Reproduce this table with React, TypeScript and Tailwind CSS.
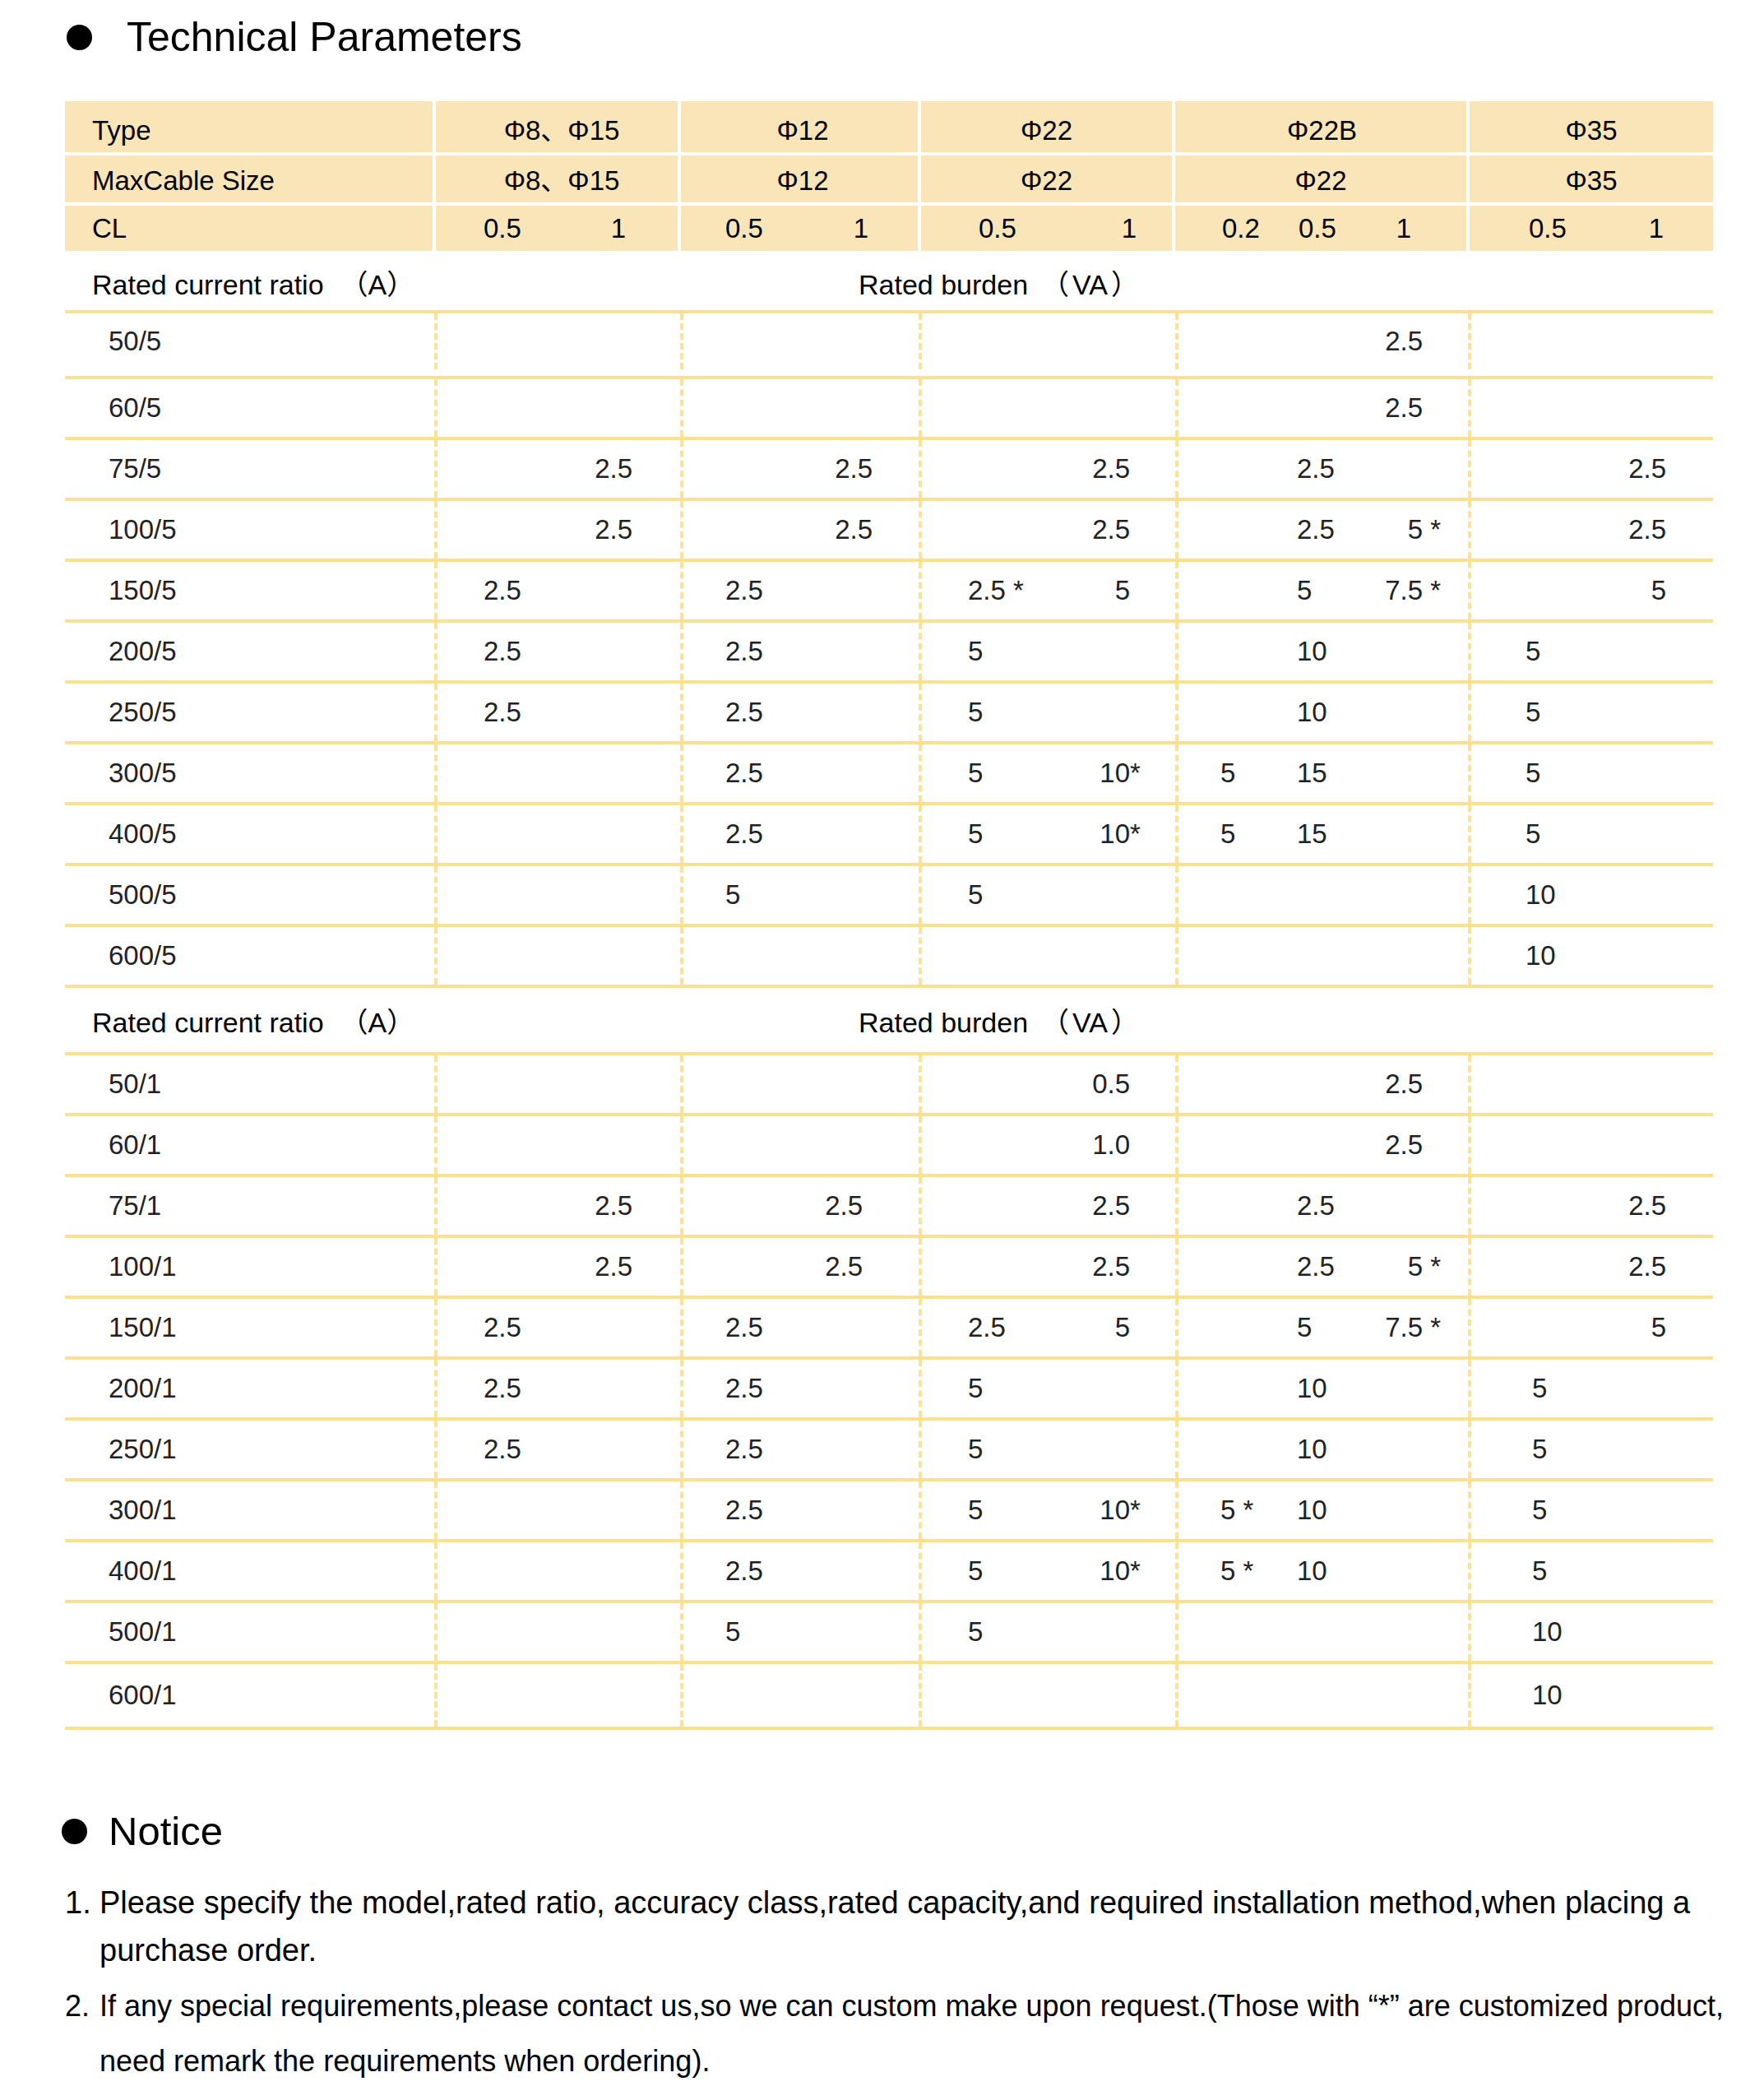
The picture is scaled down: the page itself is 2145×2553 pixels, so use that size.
const font = "font-['Liberation_Sans','Noto_Sans_CJK_SC',sans-serif]"

const bodyGrid = 'grid grid-cols-[449px_299px_290px_312px_356px_298px]'
const padA = [
  'pl-[56px] pr-[58px]',
  'pl-[51px] pr-[56px]',
  'pl-[56px] pr-[55px]',
  'pl-[51px] pr-[55px]',
  'pl-[66px] pr-[57px]',
]
const padB = [
  'pl-[56px] pr-[58px]',
  'pl-[51px] pr-[68px]',
  'pl-[56px] pr-[55px]',
  'pl-[51px] pr-[55px]',
  'pl-[74px] pr-[57px]',
]
const headPad = [
  'pl-[58px] pr-[63px]',
  'pl-[54px] pr-[60px]',
  'pl-[70px] pr-[43px]',
  'pl-[57px] pr-[67px]',
  'pl-[72px] pr-[60px]',
]

type Row = { label: string; c: string[][] }

const e = ['', '']
const e3 = ['', '', '']

const rowsA: Row[] = [
  { label: '50/5', c: [e, e, e, ['', '', '2.5'], e] },
  { label: '60/5', c: [e, e, e, ['', '', '2.5'], e] },
  { label: '75/5', c: [['', '2.5'], ['', '2.5'], ['', '2.5'], ['', '2.5', ''], ['', '2.5']] },
  { label: '100/5', c: [['', '2.5'], ['', '2.5'], ['', '2.5'], ['', '2.5', '5 *'], ['', '2.5']] },
  { label: '150/5', c: [['2.5', ''], ['2.5', ''], ['2.5 *', '5'], ['', '5', '7.5 *'], ['', '5']] },
  { label: '200/5', c: [['2.5', ''], ['2.5', ''], ['5', ''], ['', '10', ''], ['5', '']] },
  { label: '250/5', c: [['2.5', ''], ['2.5', ''], ['5', ''], ['', '10', ''], ['5', '']] },
  { label: '300/5', c: [e, ['2.5', ''], ['5', '10*'], ['5', '15', ''], ['5', '']] },
  { label: '400/5', c: [e, ['2.5', ''], ['5', '10*'], ['5', '15', ''], ['5', '']] },
  { label: '500/5', c: [e, ['5', ''], ['5', ''], e3, ['10', '']] },
  { label: '600/5', c: [e, e, e, e3, ['10', '']] },
]

const rowsB: Row[] = [
  { label: '50/1', c: [e, e, ['', '0.5'], ['', '', '2.5'], e] },
  { label: '60/1', c: [e, e, ['', '1.0'], ['', '', '2.5'], e] },
  { label: '75/1', c: [['', '2.5'], ['', '2.5'], ['', '2.5'], ['', '2.5', ''], ['', '2.5']] },
  { label: '100/1', c: [['', '2.5'], ['', '2.5'], ['', '2.5'], ['', '2.5', '5 *'], ['', '2.5']] },
  { label: '150/1', c: [['2.5', ''], ['2.5', ''], ['2.5', '5'], ['', '5', '7.5 *'], ['', '5']] },
  { label: '200/1', c: [['2.5', ''], ['2.5', ''], ['5', ''], ['', '10', ''], ['5', '']] },
  { label: '250/1', c: [['2.5', ''], ['2.5', ''], ['5', ''], ['', '10', ''], ['5', '']] },
  { label: '300/1', c: [e, ['2.5', ''], ['5', '10*'], ['5 *', '10', ''], ['5', '']] },
  { label: '400/1', c: [e, ['2.5', ''], ['5', '10*'], ['5 *', '10', ''], ['5', '']] },
  { label: '500/1', c: [e, ['5', ''], ['5', ''], e3, ['10', '']] },
  { label: '600/1', c: [e, e, e, e3, ['10', '']] },
]

// right aligned numbers keep the asterisk hanging past the edge
const Right = ({ v }: { v: string }) => {
  const m = v.match(/^(.*?)(\s?\*)$/)
  if (!m) return <span className="ml-auto">{v}</span>
  return (
    <span className="ml-auto">
      {m[1]}
      <span className="inline-block w-0 whitespace-pre">{m[2]}</span>
    </span>
  )
}

const Slots = ({ vals, pad }: { vals: string[]; pad: string }) => (
  <div className={`flex items-center ${pad}`}>
    {vals.length === 3 ? (
      <>
        <span className="w-[93px] shrink-0 whitespace-pre">{vals[0]}</span>
        <span className="whitespace-pre">{vals[1]}</span>
        <Right v={vals[2]} />
      </>
    ) : (
      <>
        <span className="whitespace-pre">{vals[0]}</span>
        <Right v={vals[1]} />
      </>
    )}
  </div>
)

const SectionLabel = ({ h }: { h: string }) => (
  <div className={`flex items-center ${h} border-b-4 border-[#FBE08F] text-[34px] text-black`}>
    <span className="w-[965px] pl-[33px]">
      Rated current ratio<span className="ml-[20px]">（A）</span>
    </span>
    <span className="whitespace-pre">
      Rated burden<span className="ml-[16px]">（<span className="mx-[4px]">VA</span>）</span>
    </span>
  </div>
)

const Body = ({ rows, first, last, pads }: { rows: Row[]; first: string; last: string; pads: string[] }) => (
  <>
    {rows.map((r, i) => (
      <div
        key={r.label}
        className={`${bodyGrid} ${i === 0 ? first : i === rows.length - 1 ? last : 'h-[74px]'} border-b-4 border-[#FBE08F] text-[33px] text-[#222]`}
      >
        <div className="flex items-center pl-[53px]">{r.label}</div>
        {r.c.map((vals, j) => (
          <div key={j} className="flex items-center border-l-4 border-dashed border-[#FCE296]">
            <div className="w-full">
              <Slots vals={vals} pad={pads[j]} />
            </div>
          </div>
        ))}
      </div>
    ))}
  </>
)

const Bullet = () => <span className="block w-[31px] h-[31px] rounded-full bg-black shrink-0" />

export default function App() {
  return (
    <div className={`bg-white min-h-screen w-[2145px] ${font} text-black`}>
      <div className="flex items-center h-[90px] pl-[81px]">
        <Bullet />
        <h1 className="ml-[42px] text-[50px] leading-none font-normal">Technical Parameters</h1>
      </div>

      <div className="ml-[79px] w-[2004px] mt-[33px]">
        <div className="grid grid-cols-[447px_294px_288px_305px_354px_296px] grid-rows-[62px_57px_55px] gap-[4px] text-[33px] text-black">
          <div className="bg-[#FAE5B9] flex items-center pl-[33px] pt-[10px]">Type</div>
          <div className="bg-[#FAE5B9] flex items-center justify-center pt-[10px] pl-[12px]">Φ8、Φ15</div>
          <div className="bg-[#FAE5B9] flex items-center justify-center pt-[10px] pl-[8px]">Φ12</div>
          <div className="bg-[#FAE5B9] flex items-center justify-center pt-[10px]">Φ22</div>
          <div className="bg-[#FAE5B9] flex items-center justify-center pt-[10px] pl-[3px]">Φ22B</div>
          <div className="bg-[#FAE5B9] flex items-center justify-center pt-[10px]">Φ35</div>

          <div className="bg-[#FAE5B9] flex items-center pl-[33px] pt-[5px]">MaxCable Size</div>
          <div className="bg-[#FAE5B9] flex items-center justify-center pt-[5px] pl-[12px]">Φ8、Φ15</div>
          <div className="bg-[#FAE5B9] flex items-center justify-center pt-[5px] pl-[8px]">Φ12</div>
          <div className="bg-[#FAE5B9] flex items-center justify-center pt-[5px]">Φ22</div>
          <div className="bg-[#FAE5B9] flex items-center justify-center pt-[5px]">Φ22</div>
          <div className="bg-[#FAE5B9] flex items-center justify-center pt-[5px]">Φ35</div>

          <div className="bg-[#FAE5B9] flex items-center pl-[33px]">CL</div>
          {[['0.5', '1'], ['0.5', '1'], ['0.5', '1'], ['0.2', '0.5', '1'], ['0.5', '1']].map((v, i) => (
            <div key={i} className="bg-[#FAE5B9] flex items-center">
              <div className="w-full">
                <Slots vals={v} pad={headPad[i]} />
              </div>
            </div>
          ))}
        </div>

        <SectionLabel h="h-[76px] pt-[10px]" />
        <Body rows={rowsA} first="h-[80px] pb-[8px]" last="h-[74px]" pads={padA} />

        <SectionLabel h="h-[82px] pt-[6px]" />
        <Body rows={rowsB} first="h-[74px]" last="h-[80px]" pads={padB} />
      </div>

      <div className="flex items-center h-[90px] pl-[75px] mt-[78px]">
        <Bullet />
        <h2 className="ml-[26px] text-[49px] leading-none font-normal">Notice</h2>
      </div>

      <div className="ml-[79px] w-[2040px] mt-[13px] text-black">
        <div className="flex text-[38px] leading-[58px]">
          <span className="w-[42px] shrink-0">1.</span>
          <p className="w-[1960px]">
            Please specify the model,rated ratio, accuracy class,rated capacity,and required installation method,when
            placing a purchase order.
          </p>
        </div>
        <div className="flex text-[36px] leading-[67px] mt-[5px]">
          <span className="w-[42px] shrink-0">2.</span>
          <p>
            If any special requirements,please contact us,so we can custom make upon request.(Those with “*” are
            customized product, need remark the requirements when ordering).
          </p>
        </div>
      </div>
    </div>
  )
}
